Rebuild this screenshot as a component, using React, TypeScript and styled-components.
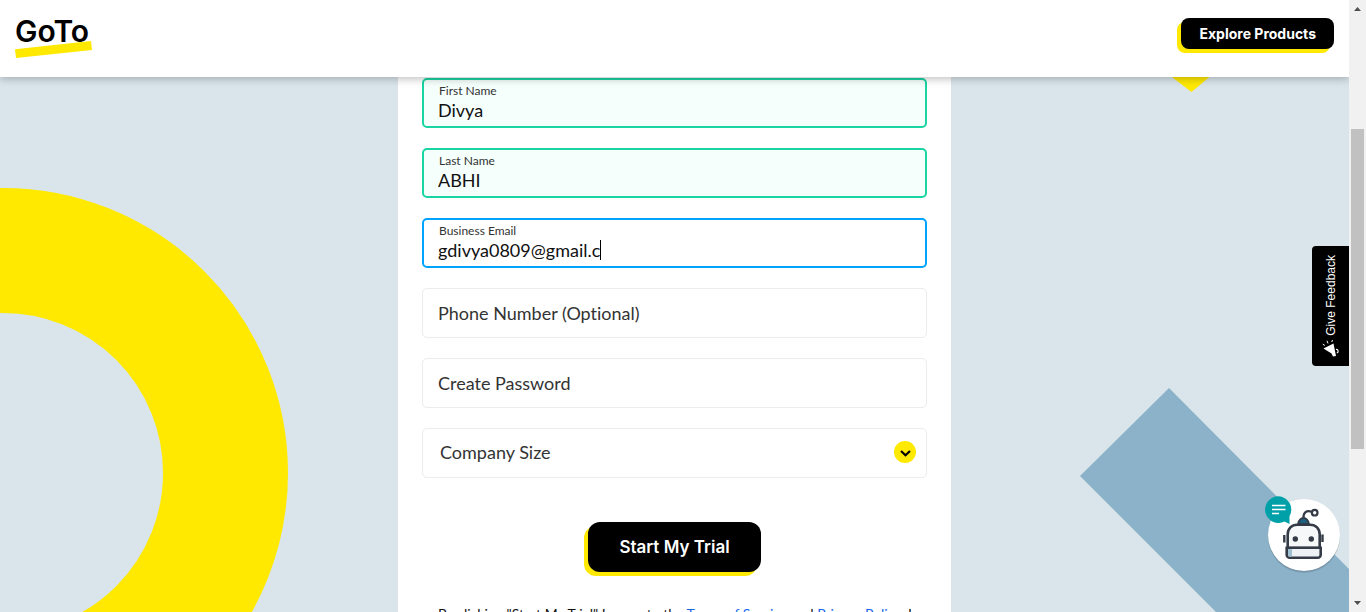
import React, { useState } from 'react';
import styled, { createGlobalStyle, css } from 'styled-components';

const colors = {
  yellow: '#ffe900',
  black: '#000000',
  page: '#d9e5eb',
  band: '#8bb2c8',
  valid: '#1ad4a3',
  validFill: '#f5fffc',
  focus: '#00a4ff',
  line: '#ececec',
  link: '#1567e8',
};

const bodyFont = 'Lato, "Open Sans", sans-serif';
const buttonFont = 'Inter, Roboto, sans-serif';

const GlobalStyle = createGlobalStyle`
  *, *::before, *::after { box-sizing: border-box; }
  body {
    margin: 0;
    font-family: ${bodyFont};
    font-variant-ligatures: none;
    color: #111;
    overflow: hidden;
  }
  button, input, select { font: inherit; font-variant-ligatures: none; color: inherit; }
`;

const Window = styled.div`
  display: flex;
  height: 100vh;
`;

const Page = styled.div`
  position: relative;
  flex: 1;
  min-width: 0;
  display: flex;
  flex-direction: column;
  overflow: hidden;
  background: ${colors.page};
`;

const Header = styled.header`
  position: relative;
  z-index: 2;
  flex: none;
  display: flex;
  justify-content: space-between;
  align-items: flex-start;
  padding: 18px 15px 19px;
  background: #fff;
  box-shadow: 0 2px 8px rgba(0, 0, 0, 0.25);
`;

const Logo = styled.a`
  display: flex;
  flex-direction: column;
  width: 77px;
  color: ${colors.black};
  text-decoration: none;
`;

const Wordmark = styled.span`
  height: 23px;
  font-family: ${buttonFont};
  font-size: 30px;
  font-weight: 600;
  line-height: 26px;
`;

const Swoosh = styled.svg`
  display: block;
  width: 77px;
  height: 17px;
`;

const ActionButton = styled.button<{ $large?: boolean }>`
  border: 0;
  background: ${colors.black};
  color: #fff;
  font-family: ${buttonFont};
  cursor: pointer;
  box-shadow: -4px 4px 0 ${colors.yellow};
  ${({ $large }) =>
    $large
      ? css`
          height: 50px;
          padding: 0 31px;
          border-radius: 12px;
          font-size: 17px;
          font-weight: 600;
        `
      : css`
          height: 31px;
          padding: 0 18px;
          border-radius: 8px;
          font-size: 14px;
          font-weight: 700;
        `}
`;

const Content = styled.main`
  position: relative;
  flex: 1;
  min-height: 0;
  display: flex;
  justify-content: center;
  overflow: hidden;
`;

const Backdrop = styled.svg`
  position: absolute;
  top: 0;
  width: 288px;
  height: 535px;
`;

const LeftBackdrop = styled(Backdrop)`
  left: 0;
`;

const RightBackdrop = styled(Backdrop)`
  right: 0;
`;

const Card = styled.form`
  position: relative;
  display: flex;
  flex-direction: column;
  align-self: flex-start;
  width: 100%;
  max-width: 553px;
  padding: 1px 24px 24px;
  background: #fff;
`;

const Fields = styled.div`
  display: flex;
  flex-direction: column;
  gap: 20px;
`;

type FieldState = 'valid' | 'focus' | 'idle';

const frame = {
  valid: css`
    border: 2px solid ${colors.valid};
    background: ${colors.validFill};
  `,
  focus: css`
    border: 2px solid ${colors.focus};
    background: #fff;
  `,
  idle: css`
    border: 1px solid ${colors.line};
    background: #fff;
  `,
};

const FilledField = styled.label<{ $state: FieldState }>`
  display: flex;
  flex-direction: column;
  height: 50px;
  padding: 3px 14px;
  border-radius: 5px;
  cursor: text;
  ${({ $state }) => frame[$state]}
`;

const FieldLabel = styled.span`
  padding-left: 1px;
  font-size: 12px;
  line-height: 16px;
  color: #333;
`;

const ValueRow = styled.span`
  display: flex;
  align-items: center;
  height: 22px;
`;

const ValueInput = styled.input<{ $hug?: boolean }>`
  ${({ $hug }) => ($hug ? 'field-sizing: content;' : 'width: 100%;')}
  height: 22px;
  padding: 0;
  border: 0;
  outline: 0;
  background: transparent;
  font-size: 18px;
`;

const Caret = styled.span`
  width: 1px;
  height: 20px;
  background: ${colors.black};
`;

const EmptyInput = styled.input`
  height: 50px;
  width: 100%;
  padding: 0 15px;
  border-radius: 5px;
  outline: 0;
  font-size: 18px;
  ${frame.idle}
  &::placeholder {
    color: #333;
    opacity: 1;
  }
`;

const SelectWrap = styled.div`
  position: relative;
  display: flex;
`;

const Select = styled.select`
  appearance: none;
  width: 100%;
  height: 50px;
  padding: 0 40px 2px 17px;
  border-radius: 5px;
  outline: 0;
  font-size: 18px;
  color: #333;
  ${frame.idle}
`;

const Chevron = styled.svg`
  position: absolute;
  top: 13px;
  right: 11px;
  width: 22px;
  height: 22px;
  pointer-events: none;
`;

const Submit = styled.div`
  display: flex;
  justify-content: center;
  padding: 44px 0 32px;
`;

const Terms = styled.p`
  margin: 0;
  padding: 0 8px 0 16px;
  font-size: 14px;
  line-height: 20px;
`;

const TermsLink = styled.a`
  color: ${colors.link};
  text-decoration: none;
`;

const FeedbackTab = styled.button`
  position: absolute;
  z-index: 3;
  top: 246px;
  right: 0;
  display: flex;
  flex-direction: column;
  align-items: center;
  justify-content: space-between;
  width: 37px;
  height: 120px;
  padding: 9px 0 8px;
  border: 0;
  border-radius: 4px 0 0 4px;
  background: ${colors.black};
  color: #fff;
  cursor: pointer;
`;

const FeedbackText = styled.span`
  writing-mode: vertical-rl;
  rotate: 180deg;
  white-space: nowrap;
  font-family: "Liberation Sans", Arial, sans-serif;
  font-size: 12px;
  line-height: 20px;
`;

const Megaphone = styled.svg`
  width: 18px;
  height: 18px;
`;

const ChatButton = styled.button`
  position: absolute;
  z-index: 3;
  right: 6px;
  bottom: 37px;
  padding: 0;
  border: 0;
  background: none;
  cursor: pointer;
`;

const Robot = styled.svg`
  display: block;
  width: 79px;
  height: 79px;
`;

const Scrollbar = styled.div`
  flex: none;
  display: flex;
  flex-direction: column;
  align-items: center;
  width: 17px;
  background: #f1f1f1;
`;

const ScrollArrow = styled.svg`
  flex: none;
  width: 17px;
  height: 17px;
`;

const Track = styled.div<{ $share: number }>`
  flex: ${({ $share }) => $share};
`;

const Thumb = styled(Track)`
  width: 13px;
  background: #c1c1c1;
`;

export default function App() {
  const [first, setFirst] = useState('Divya');
  const [last, setLast] = useState('ABHI');
  const [email, setEmail] = useState('gdivya0809@gmail.c');

  return (
    <Window>
      <GlobalStyle />
      <Page>
        <Header>
          <Logo href="#" aria-label="GoTo">
            <Wordmark>GoTo</Wordmark>
            <Swoosh viewBox="0 0 77 17" aria-hidden="true">
              <path d="M0 8.200 76 0l1 9L1 17z" fill={colors.yellow} />
            </Swoosh>
          </Logo>
          <ActionButton type="button">Explore Products</ActionButton>
        </Header>

        <Content>
          <LeftBackdrop viewBox="0 0 288 535" aria-hidden="true">
            <circle cx="3" cy="396" r="222.5" fill="none" stroke={colors.yellow} strokeWidth="125" />
          </LeftBackdrop>
          <RightBackdrop viewBox="0 0 288 535" aria-hidden="true">
            <path d="M107 -3h45l-21.500 18z" fill={colors.yellow} />
            <path d="M108 311 19 399l136 136h133v-43z" fill={colors.band} />
          </RightBackdrop>

          <Card onSubmit={(e) => e.preventDefault()}>
            <Fields>
              <FilledField $state="valid">
                <FieldLabel>First Name</FieldLabel>
                <ValueRow>
                  <ValueInput value={first} onChange={(e) => setFirst(e.target.value)} />
                </ValueRow>
              </FilledField>
              <FilledField $state="valid">
                <FieldLabel>Last Name</FieldLabel>
                <ValueRow>
                  <ValueInput value={last} onChange={(e) => setLast(e.target.value)} />
                </ValueRow>
              </FilledField>
              <FilledField $state="focus">
                <FieldLabel>Business Email</FieldLabel>
                <ValueRow>
                  <ValueInput $hug value={email} onChange={(e) => setEmail(e.target.value)} />
                  <Caret />
                </ValueRow>
              </FilledField>
              <EmptyInput type="tel" placeholder="Phone Number (Optional)" aria-label="Phone Number (Optional)" />
              <EmptyInput type="password" placeholder="Create Password" aria-label="Create Password" />
              <SelectWrap>
                <Select aria-label="Company Size" defaultValue="">
                  <option value="">Company Size</option>
                </Select>
                <Chevron viewBox="0 0 22 22" aria-hidden="true">
                  <circle cx="11" cy="11" r="11" fill={colors.yellow} />
                  <path d="M7 10l4.500 4.200L16 10" fill="none" stroke="#000" strokeWidth="2.200" />
                </Chevron>
              </SelectWrap>
            </Fields>
            <Submit>
              <ActionButton $large type="submit">Start My Trial</ActionButton>
            </Submit>
            <Terms>
              By clicking "Start My Trial" I agree to the <TermsLink href="#">Terms of Service</TermsLink> and{' '}
              <TermsLink href="#">Privacy Policy</TermsLink>. I
            </Terms>
          </Card>
        </Content>

        <FeedbackTab type="button">
          <FeedbackText>Give Feedback</FeedbackText>
          <Megaphone viewBox="0 0 18 18" aria-hidden="true">
            <path d="M1.500 8.500 11.500 3.500 14 16l-3 .5-1.500-3z" fill="#fff" />
            <path d="M14 9.500a1.700 1.700 0 0 1 .8 3.400" fill="none" stroke="#fff" strokeWidth="1.200" />
            <path d="M.8 4.200l2 1.200M5 .8l1 2.600M10.500 0l-.8 2" stroke="#fff" strokeWidth="1" />
          </Megaphone>
        </FeedbackTab>

        <ChatButton type="button" aria-label="Open chat">
          <Robot viewBox="0 0 79 79" aria-hidden="true">
            <circle cx="40" cy="41" r="36" fill="#000" opacity="0.1" />
            <circle cx="40" cy="40" r="36" fill="#000" opacity="0.1" />
            <circle cx="40" cy="39" r="36" fill="#fff" />
            <path d="M34 28c1-4 2.500-6 5.500-6s4.500 2 5.500 6z" fill="#1d5f80" stroke="#343b47" strokeWidth="1.800" />
            <path d="M39.500 22c-.3-5.500 3-8 8-6.300" fill="none" stroke="#343b47" strokeWidth="2.200" />
            <circle cx="50.700" cy="16.700" r="2.800" fill="#fff" stroke="#343b47" strokeWidth="2.200" />
            <path d="M23.700 52V38.500c0-6 4-9.800 9.500-9.800h13c5.500 0 9.500 3.800 9.500 9.800V52z" fill="#f5f7f9" stroke="#343b47" strokeWidth="2.600" />
            <path d="M22.700 51.700h34v7a3 3 0 0 1-3 3h-28a3 3 0 0 1-3-3z" fill="#edf1f4" stroke="#343b47" strokeWidth="2.600" />
            <path d="M24 53h4v7.400h-3a1 1 0 0 1-1-1z" fill="#9fc0d0" />
            <circle cx="31.300" cy="43" r="2.700" fill="#343b47" />
            <circle cx="47.300" cy="43" r="2.700" fill="#343b47" />
            <path d="M20.300 39v7.500M58.500 38.500V46" stroke="#343b47" strokeWidth="2.400" />
            <path d="M14.300.3a13.300 13.300 0 0 1 11.200 20V28l-5-2.600A13.300 13.300 0 1 1 14.300.3z" fill="#00a0a8" />
            <path d="M8 9.500h13.500M8 13.500h13.500M8 17.500h7" stroke="#fff" strokeWidth="1.500" />
          </Robot>
        </ChatButton>
      </Page>

      <Scrollbar aria-hidden="true">
        <ScrollArrow viewBox="0 0 17 17">
          <path d="M5 11h7L8.500 7z" fill="#505050" />
        </ScrollArrow>
        <Track $share={112} />
        <Thumb $share={320} />
        <Track $share={146} />
        <ScrollArrow viewBox="0 0 17 17">
          <path d="M5 6h7l-3.500 4z" fill="#505050" />
        </ScrollArrow>
      </Scrollbar>
    </Window>
  );
}
